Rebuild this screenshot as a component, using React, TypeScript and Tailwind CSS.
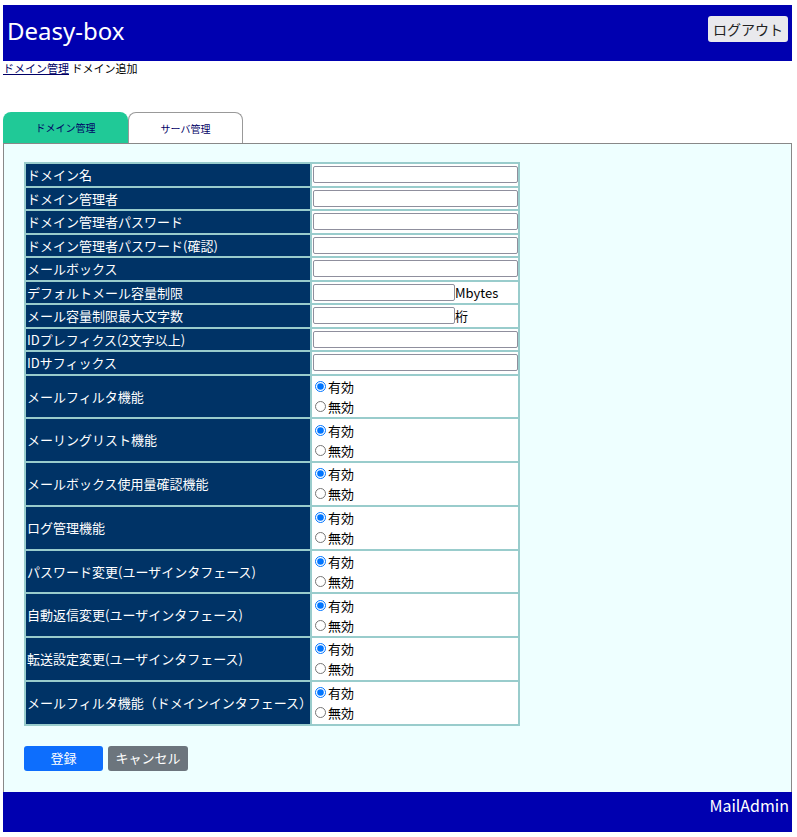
import React from "react";

const textRows: { label: string; suffix?: string }[] = [
  { label: "ドメイン名" },
  { label: "ドメイン管理者" },
  { label: "ドメイン管理者パスワード" },
  { label: "ドメイン管理者パスワード(確認)" },
  { label: "メールボックス" },
  { label: "デフォルトメール容量制限", suffix: "Mbytes" },
  { label: "メール容量制限最大文字数", suffix: "桁" },
  { label: "IDプレフィクス(2文字以上)" },
  { label: "IDサフィックス" },
];

const radioRows = [
  "メールフィルタ機能",
  "メーリングリスト機能",
  "メールボックス使用量確認機能",
  "ログ管理機能",
  "パスワード変更(ユーザインタフェース)",
  "自動返信変更(ユーザインタフェース)",
  "転送設定変更(ユーザインタフェース)",
  "メールフィルタ機能（ドメインインタフェース）",
];

const font = { fontFamily: '"Noto Sans CJK JP", "Noto Sans", sans-serif' };

export default function App() {
  return (
    <div
      className="min-h-[837px] bg-white pt-[5px] pl-[3px] pr-[5px] text-black"
      style={font}
    >
      <header className="h-[56px] bg-[#0000b0] flex items-center justify-between pl-[4px] pr-[4px]">
        <h1 className="text-white text-[24px] leading-none mt-[-4px]" style={{ fontFamily: '"Noto Sans", sans-serif' }}>
          Deasy-box
        </h1>
        <button className="bg-[#e9e9ed] rounded-[3px] h-[26px] w-[80px] text-[14px] text-[#222] mt-[-8px]">
          ログアウト
        </button>
      </header>

      <div className="text-[11px] leading-[15px] h-[15px]">
        <a href="#" className="underline text-[#000066]">ドメイン管理</a>
        <span> ドメイン追加</span>
      </div>

      <div className="mt-[36px] flex h-[31px] items-end">
        <div className="w-[125px] h-[31px] bg-[#20c997] rounded-t-[8px] flex items-center justify-center text-[10px] text-[#000066]">
          ドメイン管理
        </div>
        <div className="w-[115px] h-[31px] bg-white border border-b-0 border-[#999] rounded-t-[8px] flex items-center justify-center text-[10px] text-[#000066]">
          サーバ管理
        </div>
      </div>

      <main className="bg-[#eeffff] border border-b-0 border-[#888] pt-[17px] pl-[20px] pb-[21px]">
        <div className="inline-grid grid-cols-[284px_206px] gap-[2px] p-[2px] bg-[#99cccc]">
          {textRows.map((r) => (
            <React.Fragment key={r.label}>
              <div className="h-[21.5px] bg-[#003366] text-white text-[13px] flex items-center pl-[1px] whitespace-nowrap">
                {r.label}
              </div>
              <div className="h-[21.5px] bg-white flex items-center pl-[1px]">
                <input
                  type="text"
                  className={`h-[17px] border border-[#8f8f9d] rounded-[2px] bg-white ${r.suffix ? "w-[142px]" : "w-[205px]"}`}
                />
                {r.suffix && <span className="text-[13px] leading-none">{r.suffix}</span>}
              </div>
            </React.Fragment>
          ))}
          {radioRows.map((label, i) => (
            <React.Fragment key={label}>
              <div className="h-[41.75px] bg-[#003366] text-white text-[13px] flex items-center pl-[1px] whitespace-nowrap">
                {label}
              </div>
              <div className="h-[41.75px] bg-white flex flex-col justify-center pl-[3px] text-[13px]">
                <label className="flex items-center h-[20px] leading-none">
                  <input type="radio" name={`r${i}`} defaultChecked className="w-[11px] h-[11px] m-0 mr-[2px]" />
                  有効
                </label>
                <label className="flex items-center h-[20px] leading-none">
                  <input type="radio" name={`r${i}`} className="w-[11px] h-[11px] m-0 mr-[2px]" />
                  無効
                </label>
              </div>
            </React.Fragment>
          ))}
        </div>

        <div className="flex gap-[5px] mt-[20px]">
          <button className="w-[79px] h-[25px] bg-[#0d6efd] text-white rounded-[3px] text-[13px]">
            登録
          </button>
          <button className="w-[80px] h-[25px] bg-[#6c757d] text-white rounded-[3px] text-[13px]">
            キャンセル
          </button>
        </div>
      </main>

      <footer className="h-[40px] bg-[#0000b0] text-white text-[16px] text-right pr-[3px] pt-[1px]">
        MailAdmin
      </footer>
    </div>
  );
}
